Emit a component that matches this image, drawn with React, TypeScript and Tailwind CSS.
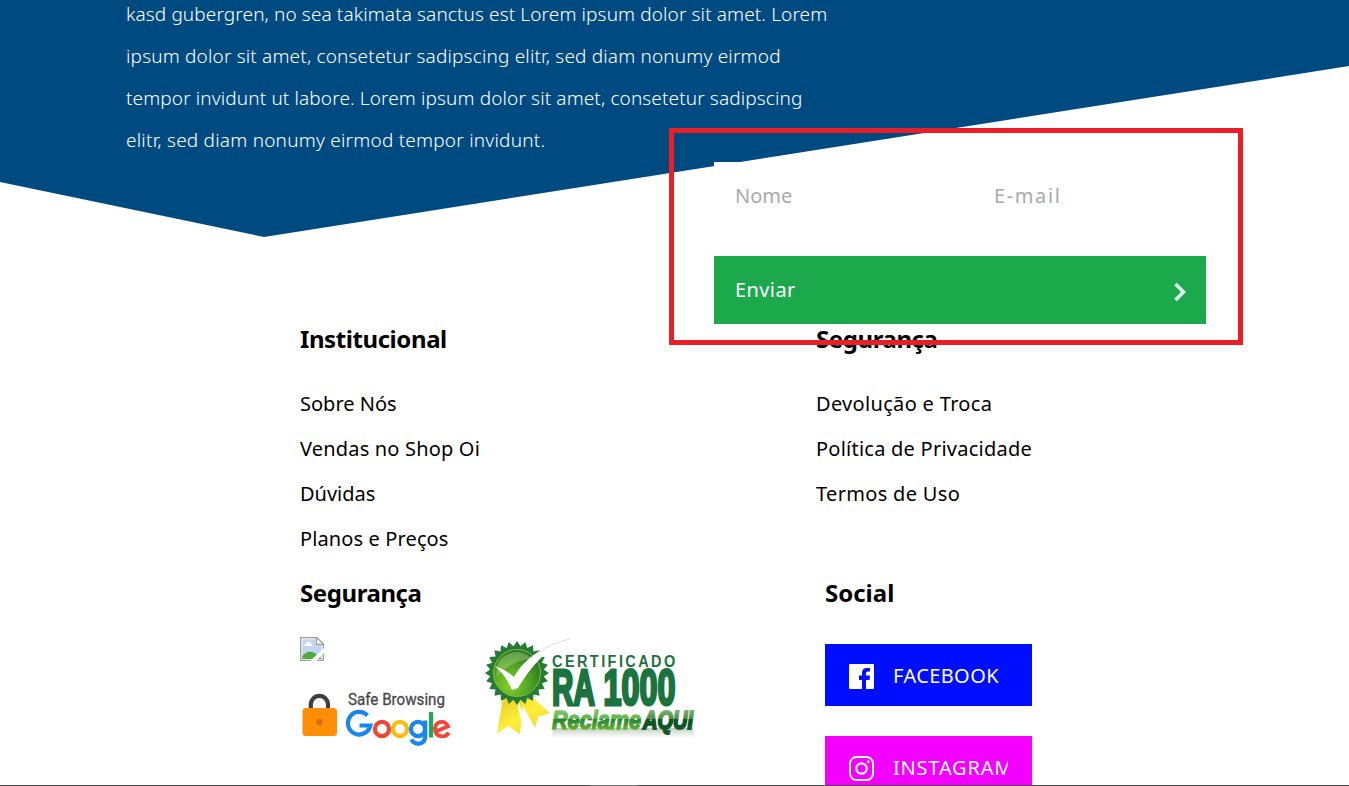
import React from 'react';

const paragraph: { text: string; spacing: string }[] = [
  { text: 'kasd gubergren, no sea takimata sanctus est Lorem ipsum dolor sit amet. Lorem', spacing: 'tracking-[0.115px]' },
  { text: 'ipsum dolor sit amet, consetetur sadipscing elitr, sed diam nonumy eirmod', spacing: 'tracking-[0.17px]' },
  { text: 'tempor invidunt ut labore. Lorem ipsum dolor sit amet, consetetur sadipscing', spacing: 'tracking-[0.12px]' },
  { text: 'elitr, sed diam nonumy eirmod tempor invidunt.', spacing: 'tracking-[0.22px]' },
];

const institutional = [
  { text: 'Sobre Nós', spacing: 'tracking-[0px]' },
  { text: 'Vendas no Shop Oi', spacing: 'tracking-[0.18px]' },
  { text: 'Dúvidas', spacing: 'tracking-[0px]' },
  { text: 'Planos e Preços', spacing: 'tracking-[0.12px]' },
];

const security = [
  { text: 'Devolução e Troca', spacing: 'tracking-[0.32px]' },
  { text: 'Política de Privacidade', spacing: 'tracking-[0.24px]' },
  { text: 'Termos de Uso', spacing: 'tracking-[0.32px]' },
];

function Heading({ children, spacing }: { children: string; spacing: string }) {
  return <h2 className={`h-[30px] text-2xl leading-[30px] font-bold whitespace-nowrap ${spacing}`}>{children}</h2>;
}

function Links({ title, items }: { title: string; items: { text: string; spacing: string }[] }) {
  return (
    <nav>
      <Heading spacing="tracking-[-0.42px]">{title}</Heading>
      <ul className="mt-[27px]">
        {items.map((item) => (
          <li key={item.text} className={`h-[45px] text-xl leading-[45px] whitespace-nowrap ${item.spacing}`}>{item.text}</li>
        ))}
      </ul>
    </nav>
  );
}

function BrokenImage() {
  return (
    <svg className="block h-6 w-6" viewBox="0 0 24 24">
      <path d="M.7 .7H17L23.3 7V23.3H.7Z" fill="#fff" stroke="#9c9c9c" strokeWidth="1.3" />
      <path d="M2.3 2.3H15.5V8H21.7V22H2.3Z" fill="#c4d5f2" />
      <path d="M4 9C4 6.5 6.3 7 7 5.5C8.5 3.5 10.5 5 10.5 6.5C12.5 6.5 12.5 9 12 9Z" fill="#fff" />
      <path d="M2.3 22V19C6 14 12 13.5 16 17L21.7 22Z" fill="#52aa38" />
      <path d="M10 24L24 11V15.5L16.5 24Z" fill="#fff" />
      <path d="M16.4 1V7.3H23" fill="none" stroke="#9c9c9c" strokeWidth="1.3" />
    </svg>
  );
}

function SafeBrowsing() {
  return (
    <svg className="block h-[60px] w-[155px]" viewBox="300 687 155 60">
      <path d="M310.8 710V704.5A8.6 8.6 0 0 1 328 704.5V710" fill="none" stroke="#3c4147" strokeWidth="4.2" />
      <rect x="302.5" y="708" width="34.5" height="28" rx="3.5" fill="#ff8d05" />
      <circle cx="319.5" cy="722" r="3.2" fill="#cf7212" />
      <text x="348" y="704.5" fontFamily="Roboto, sans-serif" fontSize="16" fill="#46484b" stroke="#46484b" strokeWidth=".3" textLength="97" lengthAdjust="spacingAndGlyphs">Safe Browsing</text>
      <g fill="none" strokeWidth="4.2">
        <path d="M367.5 715.5A11.3 11.3 0 1 0 370.3 725.5H359.5" stroke="#1786f0" />
        <circle cx="382" cy="729" r="7.1" stroke="#ef4639" />
        <circle cx="400" cy="729" r="7.1" stroke="#f9bd13" />
        <circle cx="418" cy="729" r="7.1" stroke="#1786f0" />
        <path d="M425.2 720.5V736C425.2 745 414.5 746 411.3 739.5" stroke="#1786f0" />
        <path d="M431 712V737.5" stroke="#21a857" />
        <path d="M436 731.5L448 726.3C444 718.5 435 722 435 729C435 737.5 445.5 738.5 448.7 732.5" stroke="#ef4639" strokeWidth="3.8" />
      </g>
    </svg>
  );
}

const sealPoints = Array.from({ length: 48 }, (_, i) => {
  const r = i % 2 ? 27 : 32;
  const a = (i * Math.PI) / 24;
  return `${(517 + r * Math.cos(a)).toFixed(2)},${(673 + r * Math.sin(a)).toFixed(2)}`;
}).join(' ');

function Certificate() {
  const face = '"Liberation Sans Narrow", "Liberation Sans", sans-serif';
  return (
    <svg className="block h-[104px] w-[222px]" viewBox="483 635 222 104">
      <defs>
        <radialGradient id="seal" cx="35%" cy="75%" r="75%">
          <stop offset="0" stopColor="#8ad12a" /><stop offset=".6" stopColor="#4ba020" /><stop offset="1" stopColor="#2d7526" />
        </radialGradient>
        <linearGradient id="ribbon" x1="0" y1="0" x2="1" y2="1">
          <stop stopColor="#e5c91b" /><stop offset=".5" stopColor="#fff03d" /><stop offset="1" stopColor="#e9ca24" />
        </linearGradient>
        <linearGradient id="word" gradientUnits="userSpaceOnUse" x1="0" y1="708" x2="0" y2="730">
          <stop stopColor="#8acb78" /><stop offset=".48" stopColor="#64b54c" /><stop offset=".52" stopColor="#23863a" /><stop offset="1" stopColor="#6bb52c" />
        </linearGradient>
        <linearGradient id="aqui" gradientUnits="userSpaceOnUse" x1="0" y1="708" x2="0" y2="730">
          <stop stopColor="#86bd80" /><stop offset=".48" stopColor="#528b4c" /><stop offset=".52" stopColor="#075423" /><stop offset="1" stopColor="#17582e" />
        </linearGradient>
        <linearGradient id="reflection" x1="0" y1="0" x2="0" y2="1">
          <stop stopColor="#85a982" stopOpacity=".6" /><stop offset="1" stopColor="#cad5ca" stopOpacity=".15" />
        </linearGradient>
      </defs>
      <path d="M503 698L497 734L508 726L520 734L523 706L535 728L538 717L550 713L534 699Z" fill="url(#ribbon)" />
      <path d="M518 701Q518 719 527 730L533 727Q523 716 518 701Z" fill="#fff" />
      <polygon points={sealPoints} fill="#267b35" />
      <circle cx="517" cy="673" r="23.5" fill="url(#seal)" stroke="#83bc46" strokeWidth="1" />
      <path d="M501 659A22 22 0 0 1 533 659Q514 659 497 676Q496 665 501 659Z" fill="#c5e5a3" opacity=".35" />
      <path d="M495 666Q505 669 514 677C524 659 543 645 571 639C547 648 532 665 518 688L512 690Q507 677 495 666Z" fill="#fff" />
      <path d="M537 653Q552 643 570 639" fill="none" stroke="#dcdedc" strokeWidth="1" />
      <g transform="translate(552 666.5) scale(.85 1)">
        <text fontFamily="Liberation Sans, sans-serif" fontWeight="700" fontSize="17" fill="#1c713f" textLength="145" lengthAdjust="spacing">CERTIFICADO</text>
      </g>
      <g transform="translate(552 704.5) scale(.62 1.22)" fontFamily={face} fontWeight="700" fontSize="41" fill="#1b743f" stroke="#1b743f" strokeWidth="2.6">
        <text textLength="69" lengthAdjust="spacingAndGlyphs">RA</text>
        <text x="83" textLength="116" lengthAdjust="spacingAndGlyphs">1000</text>
      </g>
      <path d="M553 728H693L694 737H552Z" fill="url(#reflection)" />
      <text x="552" y="728.5" fontFamily={face} fontWeight="700" fontStyle="italic" fontSize="25" fill="url(#word)" stroke="url(#word)" strokeWidth="1.5" textLength="89" lengthAdjust="spacingAndGlyphs">Reclame</text>
      <text x="643" y="728.5" fontFamily={face} fontWeight="700" fontStyle="italic" fontSize="26" fill="url(#aqui)" stroke="url(#aqui)" strokeWidth="2" textLength="50" lengthAdjust="spacingAndGlyphs">AQUI</text>
    </svg>
  );
}

export default function App() {
  return (
    <div className="relative h-[786px] w-[1349px] overflow-hidden bg-white font-['Noto_Sans','Open_Sans',sans-serif] text-black">
      <header className="flow-root h-[237px] bg-[#004a82] pl-[126px] [clip-path:polygon(0_0,1349px_0,1349px_66px,264px_237px,0_182px)]">
        <p className="-mt-[7px] text-[19px] leading-[42px] font-[350] whitespace-nowrap text-white">
          {paragraph.map((line) => <span key={line.text} className={`block ${line.spacing}`}>{line.text}</span>)}
        </p>
      </header>

      <form className="relative -mt-[75px] ml-[714px] w-[492px]">
        <div className="grid h-[68px] grid-cols-[259px_233px] bg-white">
          <input aria-label="Nome" placeholder="Nome" className="min-w-0 pl-[21px] text-xl outline-none placeholder:text-[#aaaaaa]" />
          <input aria-label="E-mail" placeholder="E-mail" className="min-w-0 pl-[21px] text-xl tracking-[1.6px] outline-none placeholder:text-[#aaaaaa]" />
        </div>
        <button type="button" className="mt-[26px] flex h-[68px] w-full items-center justify-between bg-[#1ca94c] pr-5 pl-[21px] text-xl tracking-[0.4px] text-white">
          <span>Enviar</span>
          <svg className="mt-1 h-5 w-3" viewBox="0 0 12 20"><path d="M1.5 2L9.5 10L1.5 18" fill="none" stroke="#fff" strokeOpacity=".9" strokeWidth="3.6" /></svg>
        </button>
      </form>

      <footer className="pl-[300px]">
        <div className="grid grid-cols-[516px_300px]">
          <Links title="Institucional" items={institutional} />
          <Links title="Segurança" items={security} />
        </div>
        <div className="mt-[17px] grid grid-cols-[525px_207px]">
          <section>
            <Heading spacing="tracking-[-0.42px]">Segurança</Heading>
            <div className="mt-[27px] flex gap-[28px]">
              <div className="flex flex-col gap-[26px] pt-[2px]"><BrokenImage /><SafeBrowsing /></div>
              <Certificate />
            </div>
          </section>
          <section>
            <Heading spacing="tracking-[0px]">Social</Heading>
            <a className="mt-[36px] flex h-[62px] items-center bg-[#000eff] pl-6 text-xl text-white">
              <svg className="mt-[3px] h-[25px] w-[25px]" viewBox="0 0 25 25"><path fill="#fff" d="M1 0H24Q25 0 25 1V24Q25 25 24 25H17V16H20.5L21 11.5H17V9Q17 7.5 19 7.5H21V4H18Q13 4 13 9V11.5H10V16H13V25H1Q0 25 0 24V1Q0 0 1 0Z" /></svg>
              <span className="mt-0.5 ml-[19px] tracking-[0.4px]">FACEBOOK</span>
            </a>
            <a className="mt-[30px] flex h-[62px] items-center bg-[#f300ff] pl-6 text-xl text-white">
              <svg className="mt-[2px] h-[25px] w-[25px]" viewBox="0 0 25 25" fill="none" stroke="#fff"><rect x="1" y="1" width="23" height="23" rx="6.5" strokeWidth="2" /><circle cx="12.5" cy="12.5" r="5.2" strokeWidth="2.2" /><circle cx="19.2" cy="5.8" r="1" fill="#fff" strokeWidth="1" /></svg>
              <span className="mt-0.5 ml-[19px] w-[115px] overflow-hidden tracking-[0.8px] whitespace-nowrap">INSTAGRAM</span>
            </a>
          </section>
        </div>
      </footer>

      <div className="pointer-events-none absolute top-[128px] left-[669px] h-[217px] w-[574px] border-[5px] border-[#e91e26]" />
      <div className="absolute bottom-0 left-0 flex h-px w-full bg-[#4a4a4a] pl-[590px]"><div className="h-px w-12 bg-[#777777]" /></div>
    </div>
  );
}
